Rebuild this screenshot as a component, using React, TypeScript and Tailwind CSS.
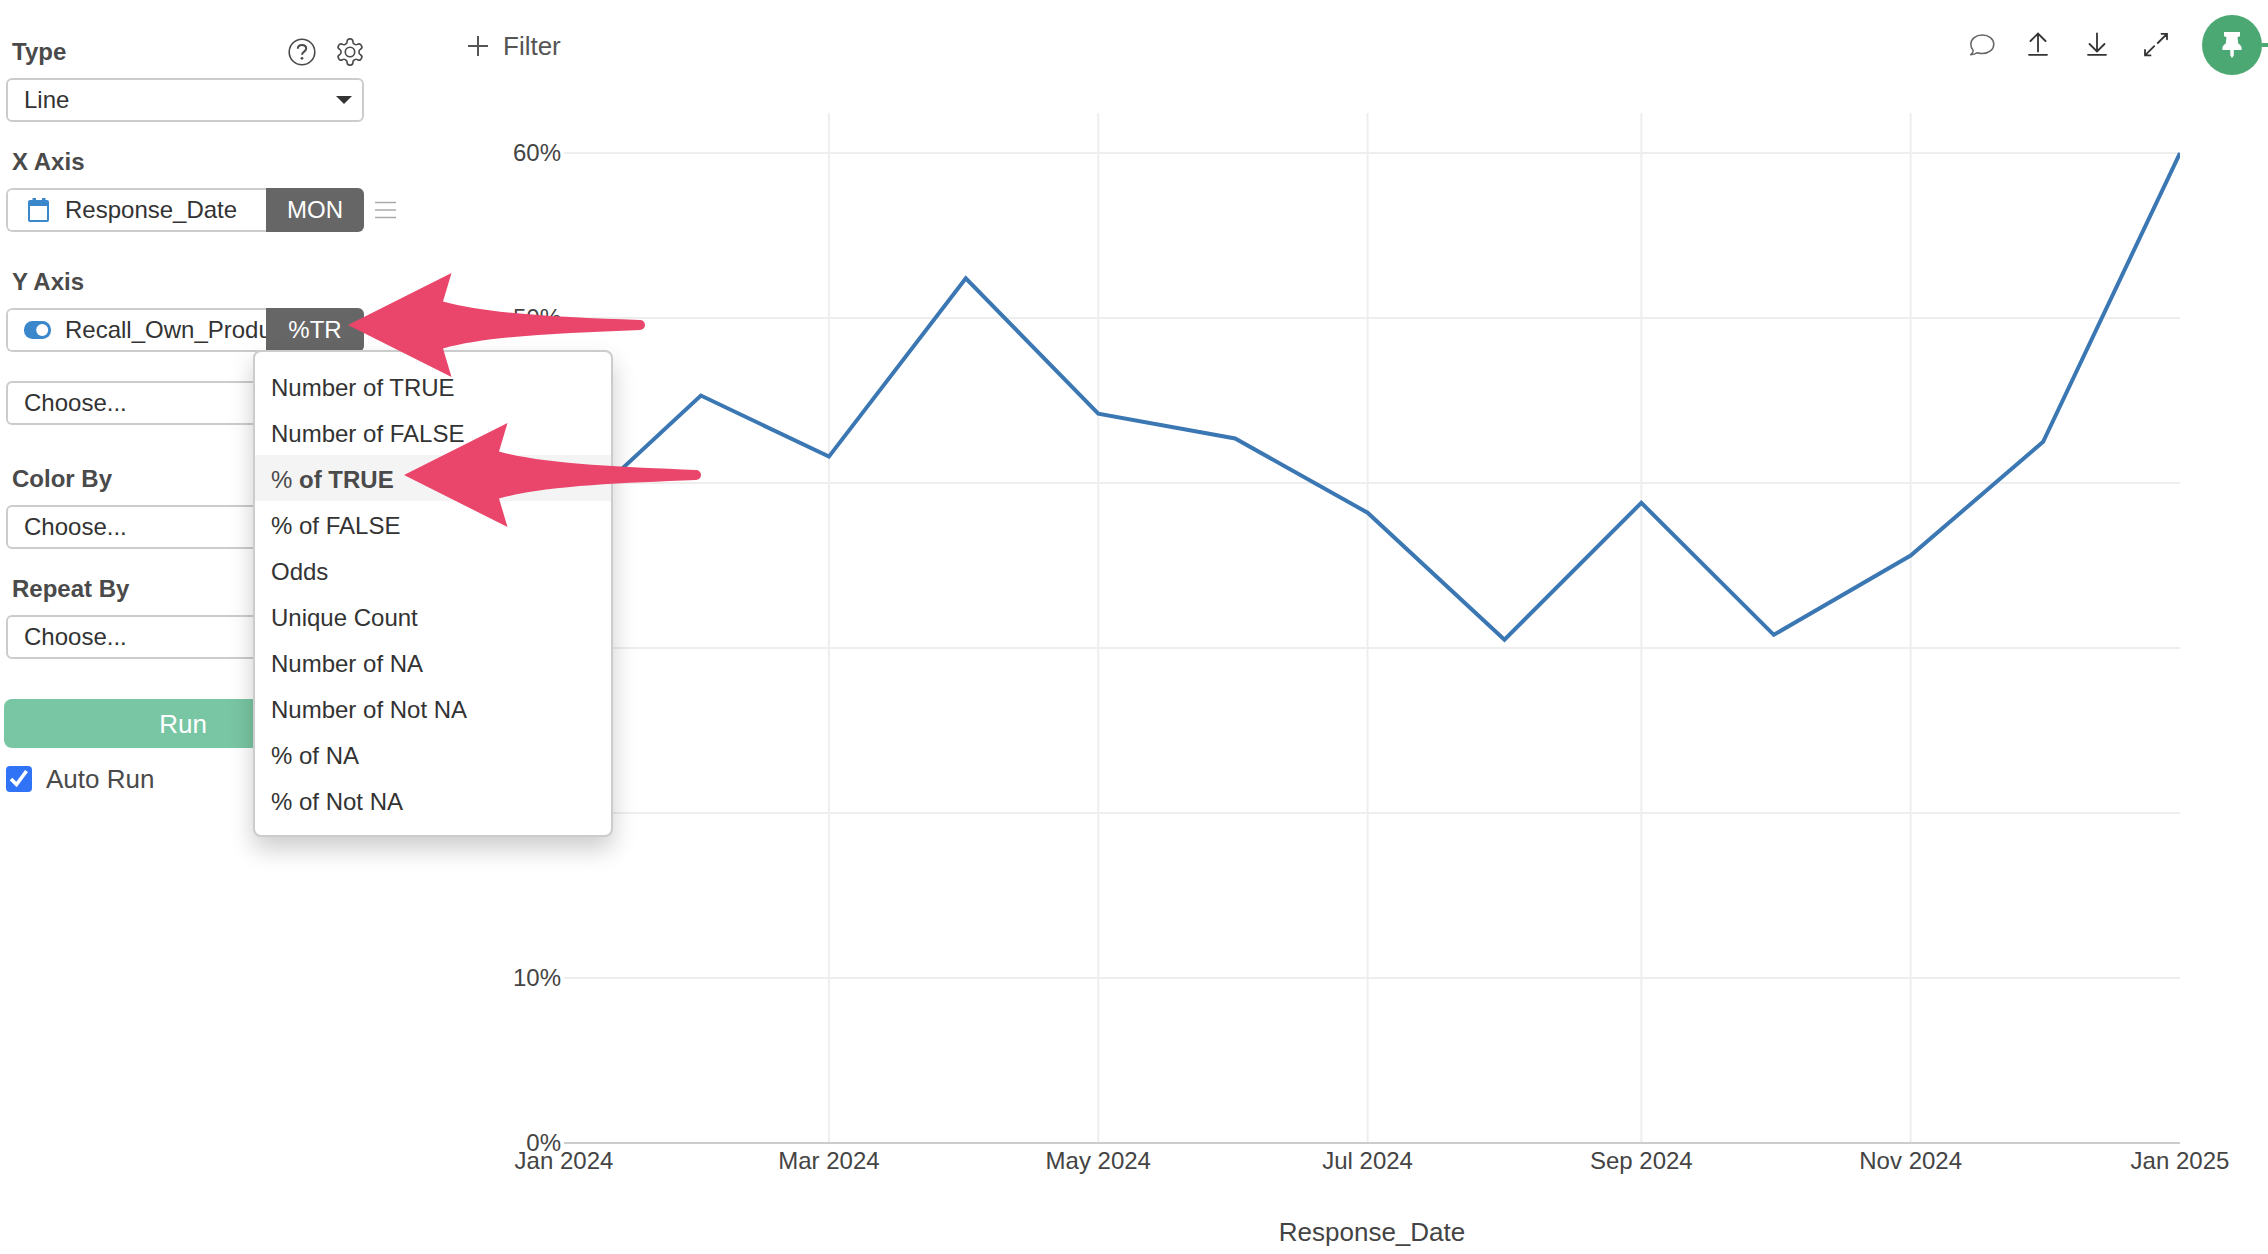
import { useState } from "react";
import type { ReactNode } from "react";

const aggregations = [
  "Number of TRUE",
  "Number of FALSE",
  "% of TRUE",
  "% of FALSE",
  "Odds",
  "Unique Count",
  "Number of NA",
  "Number of Not NA",
  "% of NA",
  "% of Not NA",
];

// plot area, in chart units
const LEFT = 124;
const RIGHT = 1740;
const TOP = 53;
const BOTTOM = 1043;
const MAX = 60;

const points = [
  { day: 0, value: 37.6 },
  { day: 31, value: 45.3 },
  { day: 60, value: 41.6 },
  { day: 91, value: 52.4 },
  { day: 121, value: 44.2 },
  { day: 152, value: 42.7 },
  { day: 182, value: 38.2 },
  { day: 213, value: 30.5 },
  { day: 244, value: 38.8 },
  { day: 274, value: 30.8 },
  { day: 305, value: 35.6 },
  { day: 335, value: 42.5 },
  { day: 366, value: 60 },
];

const xTicks = [
  { day: 0, label: "Jan 2024" },
  { day: 60, label: "Mar 2024" },
  { day: 121, label: "May 2024" },
  { day: 182, label: "Jul 2024" },
  { day: 244, label: "Sep 2024" },
  { day: 305, label: "Nov 2024" },
  { day: 366, label: "Jan 2025" },
];

const yTicks = [0, 10, 20, 30, 40, 50, 60];

const xPos = (day: number) => LEFT + ((RIGHT - LEFT) * day) / 366;
const yPos = (value: number) => BOTTOM - ((BOTTOM - TOP) * value) / MAX;

export default function App() {
  return (
    <div className="flex min-h-screen bg-white font-['Liberation_Sans',Arial,sans-serif] text-[24px] leading-[28px] text-[#333]">
      <Sidebar />
      <main className="min-w-0 flex-1">
        <Toolbar />
        <LineChart />
      </main>
    </div>
  );
}

function Sidebar() {
  const [autoRun, setAutoRun] = useState(true);

  return (
    <aside className="w-[440px] shrink-0 pt-[38px] pl-[6px]">
      <div className="flex w-[358px] items-center justify-between">
        <FieldLabel htmlFor="chart-type">Type</FieldLabel>
        <div className="flex gap-5 text-[#4a4a4a]">
          <button aria-label="Help"><HelpIcon /></button>
          <button aria-label="Settings"><GearIcon /></button>
        </div>
      </div>
      <div className="mt-[12px]">
        <Select id="chart-type" value="Line" />
      </div>

      <div className="mt-[26px] mb-[12px]"><FieldLabel>X Axis</FieldLabel></div>
      <div className="flex items-center gap-[11px]">
        <ColumnField icon={<CalendarIcon />} name="Response_Date" func="MON" />
        <button aria-label="X axis options"><MenuIcon /></button>
      </div>

      <div className="mt-[36px] mb-[12px]"><FieldLabel>Y Axis</FieldLabel></div>
      <div className="relative w-[358px]">
        <ColumnField icon={<ToggleIcon />} name="Recall_Own_Product" func="%TR" />
        <AggregationMenu />
        <Arrow className="absolute top-[-36px] left-[342px] z-20" />
        <Arrow className="absolute top-[114px] left-[398px] z-20" />
      </div>
      <div className="mt-[29px]">
        <Select label="Y Axis 2" value="Choose..." />
      </div>

      <div className="mt-[40px] mb-[12px]"><FieldLabel htmlFor="color-by">Color By</FieldLabel></div>
      <Select id="color-by" value="Choose..." />

      <div className="mt-[26px] mb-[12px]"><FieldLabel htmlFor="repeat-by">Repeat By</FieldLabel></div>
      <Select id="repeat-by" value="Choose..." />

      <button className="mt-[40px] -ml-[2px] h-[49px] w-[358px] rounded-lg bg-[#79c6a4] text-[26px] text-white">
        Run
      </button>
      <label className="mt-[17px] flex items-center gap-[14px] text-[26px] text-[#4a4a4a]">
        <span className="grid">
          <input
            type="checkbox"
            checked={autoRun}
            onChange={(e) => setAutoRun(e.target.checked)}
            className="col-start-1 row-start-1 size-[26px] appearance-none rounded-[4px] border border-[#767676] checked:border-0 checked:bg-[#3073f6]"
          />
          {autoRun && (
            <svg viewBox="0 0 26 26" className="pointer-events-none col-start-1 row-start-1 size-[26px]" fill="none" stroke="white" strokeWidth="3.6">
              <path d="M5 13 10.500 18.500 20.500 5" />
            </svg>
          )}
        </span>
        Auto Run
      </label>
    </aside>
  );
}

function FieldLabel({ htmlFor, children }: { htmlFor?: string; children: ReactNode }) {
  const className = "block pl-[6px] font-bold text-[#4a4a4a]";
  return htmlFor ? <label htmlFor={htmlFor} className={className}>{children}</label> : <div className={className}>{children}</div>;
}

function Select({ id, label, value }: { id?: string; label?: string; value: string }) {
  return (
    <div className="grid w-[358px] items-center">
      <select
        id={id}
        aria-label={label}
        className="col-start-1 row-start-1 h-[44px] w-full appearance-none rounded-md border-2 border-[#ccc] bg-white pl-[16px] text-[#333]"
      >
        <option>{value}</option>
      </select>
      <svg viewBox="0 0 16 8" className="pointer-events-none col-start-1 row-start-1 mr-[12px] h-[8px] w-[16px] justify-self-end">
        <path d="M0 0h16L8 8z" fill="#333" />
      </svg>
    </div>
  );
}

function ColumnField({ icon, name, func }: { icon: ReactNode; name: string; func: string }) {
  return (
    <div className="flex h-[44px] w-[358px] overflow-hidden rounded-md">
      <button className="flex min-w-0 flex-1 items-center overflow-hidden rounded-l-md border-2 border-r-0 border-[#ccc] pl-[15px] text-left whitespace-nowrap">
        <span className="w-[42px] shrink-0">{icon}</span>
        {name}
      </button>
      <button className="w-[98px] shrink-0 bg-[#666] text-white">{func}</button>
    </div>
  );
}

function AggregationMenu() {
  return (
    <ul
      role="listbox"
      aria-label="Aggregation"
      className="absolute top-[42px] left-[247px] z-10 w-[360px] rounded-lg border-2 border-[#ccc] bg-white pt-[11px] pb-[12px] shadow-[0_12px_24px_rgba(0,0,0,0.2)]"
    >
      {aggregations.map((item) => {
        const selected = item === "% of TRUE";
        return (
          <li
            key={item}
            role="option"
            aria-selected={selected}
            className={selected ? "flex h-[46px] items-center bg-[#f4f4f4] px-[16px] pt-[4px] font-bold text-[#4a4a4a]" : "flex h-[46px] items-center px-[16px] pt-[4px]"}
          >
            {selected ? <span className="whitespace-pre"><span className="font-normal">% </span>of TRUE</span> : item}
          </li>
        );
      })}
    </ul>
  );
}

function Toolbar() {
  return (
    <header className="flex h-[100px] items-start justify-between pt-[15px] pl-[28px]">
      <button className="mt-[17px] flex items-center gap-[15px] text-[26px] text-[#555]">
        <svg viewBox="0 0 20 20" className="size-[20px]" stroke="currentColor" strokeWidth="2">
          <path d="M10 0v20M0 10h20" />
        </svg>
        Filter
      </button>
      <div className="flex items-center text-[#333]">
        <div className="mr-[32px] flex gap-[31px]">
          <button aria-label="Comment" className="-mr-[3px]">
            <svg viewBox="0 0 28 28" className="size-[28px]" fill="none" stroke="#666" strokeWidth="1.5" strokeLinejoin="round">
              <path d="M14.300 4C20.700 4 25.800 8 25.800 13.300S20.700 22.500 14.300 22.500c-1.700 0-3.400-.3-4.900-.8-1.900 1.300-4.300 2-6.700 2 1.500-1.200 2.500-2.800 2.500-4.300-1.500-1.600-2.400-3.800-2.400-6.100C2.800 8 7.900 4 14.300 4z" />
            </svg>
          </button>
          <button aria-label="Upload">
            <svg viewBox="0 0 28 28" className="size-[28px]" fill="none" stroke="currentColor" strokeWidth="1.8" strokeLinecap="round">
              <path d="M14 20.500V2.500M6.500 10 14 2.500l7.500 7.500M5 23.800h18" />
            </svg>
          </button>
          <button aria-label="Download">
            <svg viewBox="0 0 28 28" className="size-[28px]" fill="none" stroke="currentColor" strokeWidth="1.8" strokeLinecap="round">
              <path d="M14 2.500v18M6.500 13 14 20.500l7.500-7.500M5 23.800h18" />
            </svg>
          </button>
          <button aria-label="Expand">
            <svg viewBox="0 0 28 28" className="size-[28px]" fill="none" stroke="currentColor" strokeWidth="1.8" strokeLinecap="round">
              <path d="M15.800 12 25 2.800M19.500 2.800H25v5.500M12.200 15.200 3 24.400M3 18.900v5.500h5.500" />
            </svg>
          </button>
        </div>
        <button aria-label="Pin" className="grid size-[60px] place-items-center rounded-full bg-[#4ba872]">
          <svg viewBox="0 0 20 26" className="h-[26px] w-[20px]" fill="white">
            <path d="M2 0h16v3.500c0 .8-.5 1.200-2.500 1.500l.7 6.500c2.200 1 3.500 3 3.500 5.200 0 .8-.4 1.300-1.200 1.300h-6.700v5.500L10 26l-1.700-2.500V18H1.500c-.8 0-1.200-.5-1.200-1.300 0-2.200 1.300-4.200 3.500-5.200L4.500 5C2.500 4.700 2 4.300 2 3.500z" />
          </svg>
        </button>
        <div className="h-[4px] w-[6px] bg-[#4ba872]" />
      </div>
    </header>
  );
}

function LineChart() {
  const line = points.map((p) => `${xPos(p.day)},${yPos(p.value)}`).join(" ");

  return (
    <svg viewBox="0 0 1828 1150" className="block h-auto w-full" role="img" aria-label="Response_Date line chart">
      <clipPath id="plot">
        <rect x={LEFT} y={TOP - 1} width={RIGHT - LEFT} height={BOTTOM - TOP} />
      </clipPath>
      <g stroke="#eee" strokeWidth="2">
        {yTicks.slice(1).map((v) => <line key={v} x1={LEFT} x2={RIGHT} y1={yPos(v)} y2={yPos(v)} />)}
        {xTicks.slice(1, -1).map((t) => <line key={t.day} x1={xPos(t.day)} x2={xPos(t.day)} y1="13" y2={BOTTOM} />)}
      </g>
      <line x1={LEFT} x2={RIGHT} y1={BOTTOM} y2={BOTTOM} stroke="#ccc" strokeWidth="2" />
      <polyline points={line} clipPath="url(#plot)" fill="none" stroke="#3a77b3" strokeWidth="4" />
      <g fill="#444" fontSize="24">
        {yTicks.map((v) => <text key={v} x="121" y={yPos(v) + 8} textAnchor="end">{v}%</text>)}
        {xTicks.map((t) => <text key={t.day} x={xPos(t.day)} y="1069" textAnchor="middle">{t.label}</text>)}
      </g>
      <text x="932" y="1141" textAnchor="middle" fill="#444" fontSize="26">Response_Date</text>
    </svg>
  );
}

function Arrow({ className }: { className: string }) {
  return (
    <div className={className}>
      <svg viewBox="0 0 298 106" className="h-[106px] w-[298px]" fill="#ea456b">
        <path d="M0 53 103.500 1 95 29.500C139 42 214 45 292 48a5 5 0 0 1 0 10C214 61 139 64 95 76.500L103.500 105z" />
      </svg>
    </div>
  );
}

function HelpIcon() {
  return (
    <svg viewBox="0 0 28 28" className="size-[28px]" fill="none" stroke="currentColor" strokeWidth="1.6">
      <circle cx="14" cy="14" r="12.8" />
      <path d="M9.800 10.800c0-2.300 1.800-3.700 4.200-3.700s4.200 1.400 4.200 3.500c0 3-4.200 3-4.200 6.200" strokeWidth="2" />
      <circle cx="14" cy="20.3" r="1.4" fill="currentColor" stroke="none" />
    </svg>
  );
}

function GearIcon() {
  return (
    <svg viewBox="1.3 1.3 21.4 21.4" className="size-[28px]" fill="none" stroke="currentColor" strokeWidth="1.25" strokeLinejoin="round">
      <circle cx="12" cy="12" r="3.6" />
      <path d="M12.220 2h-.44a2 2 0 0 0-2 2v.18a2 2 0 0 1-1 1.730l-.43.25a2 2 0 0 1-2 0l-.15-.08a2 2 0 0 0-2.730.73l-.22.38a2 2 0 0 0 .73 2.730l.15.1a2 2 0 0 1 1 1.720v.51a2 2 0 0 1-1 1.740l-.15.09a2 2 0 0 0-.73 2.730l.22.38a2 2 0 0 0 2.730.73l.15-.08a2 2 0 0 1 2 0l.43.25a2 2 0 0 1 1 1.730V20a2 2 0 0 0 2 2h.44a2 2 0 0 0 2-2v-.18a2 2 0 0 1 1-1.730l.43-.25a2 2 0 0 1 2 0l.15.08a2 2 0 0 0 2.730-.73l.22-.39a2 2 0 0 0-.73-2.730l-.15-.08a2 2 0 0 1-1-1.740v-.5a2 2 0 0 1 1-1.740l.15-.09a2 2 0 0 0 .73-2.730l-.22-.38a2 2 0 0 0-2.730-.73l-.15.08a2 2 0 0 1-2 0l-.43-.25a2 2 0 0 1-1-1.730V4a2 2 0 0 0-2-2z" />
    </svg>
  );
}

function CalendarIcon() {
  return (
    <svg viewBox="0 0 24 26" className="ml-[4px] h-[26px] w-[24px]">
      <path d="M3 3h2.500V1H9v2h6V1h3.500v2H20a2 2 0 0 1 2 2v18a2 2 0 0 1-2 2H3a2 2 0 0 1-2-2V5a2 2 0 0 1 2-2zM3 9v14h17V9z" fill="#3b87cc" fillRule="evenodd" />
    </svg>
  );
}

function ToggleIcon() {
  return (
    <svg viewBox="0 0 28 18" className="h-[18px] w-[28px]">
      <rect x="1" width="27" height="18" rx="8.5" fill="#3b87cc" />
      <circle cx="19.2" cy="9" r="6" fill="white" />
    </svg>
  );
}

function MenuIcon() {
  return (
    <svg viewBox="0 0 22 18" className="h-[18px] w-[22px]" stroke="#aaa" strokeWidth="1.6">
      <path d="M0 1.500h21M0 9h21M0 16.500h21" />
    </svg>
  );
}
